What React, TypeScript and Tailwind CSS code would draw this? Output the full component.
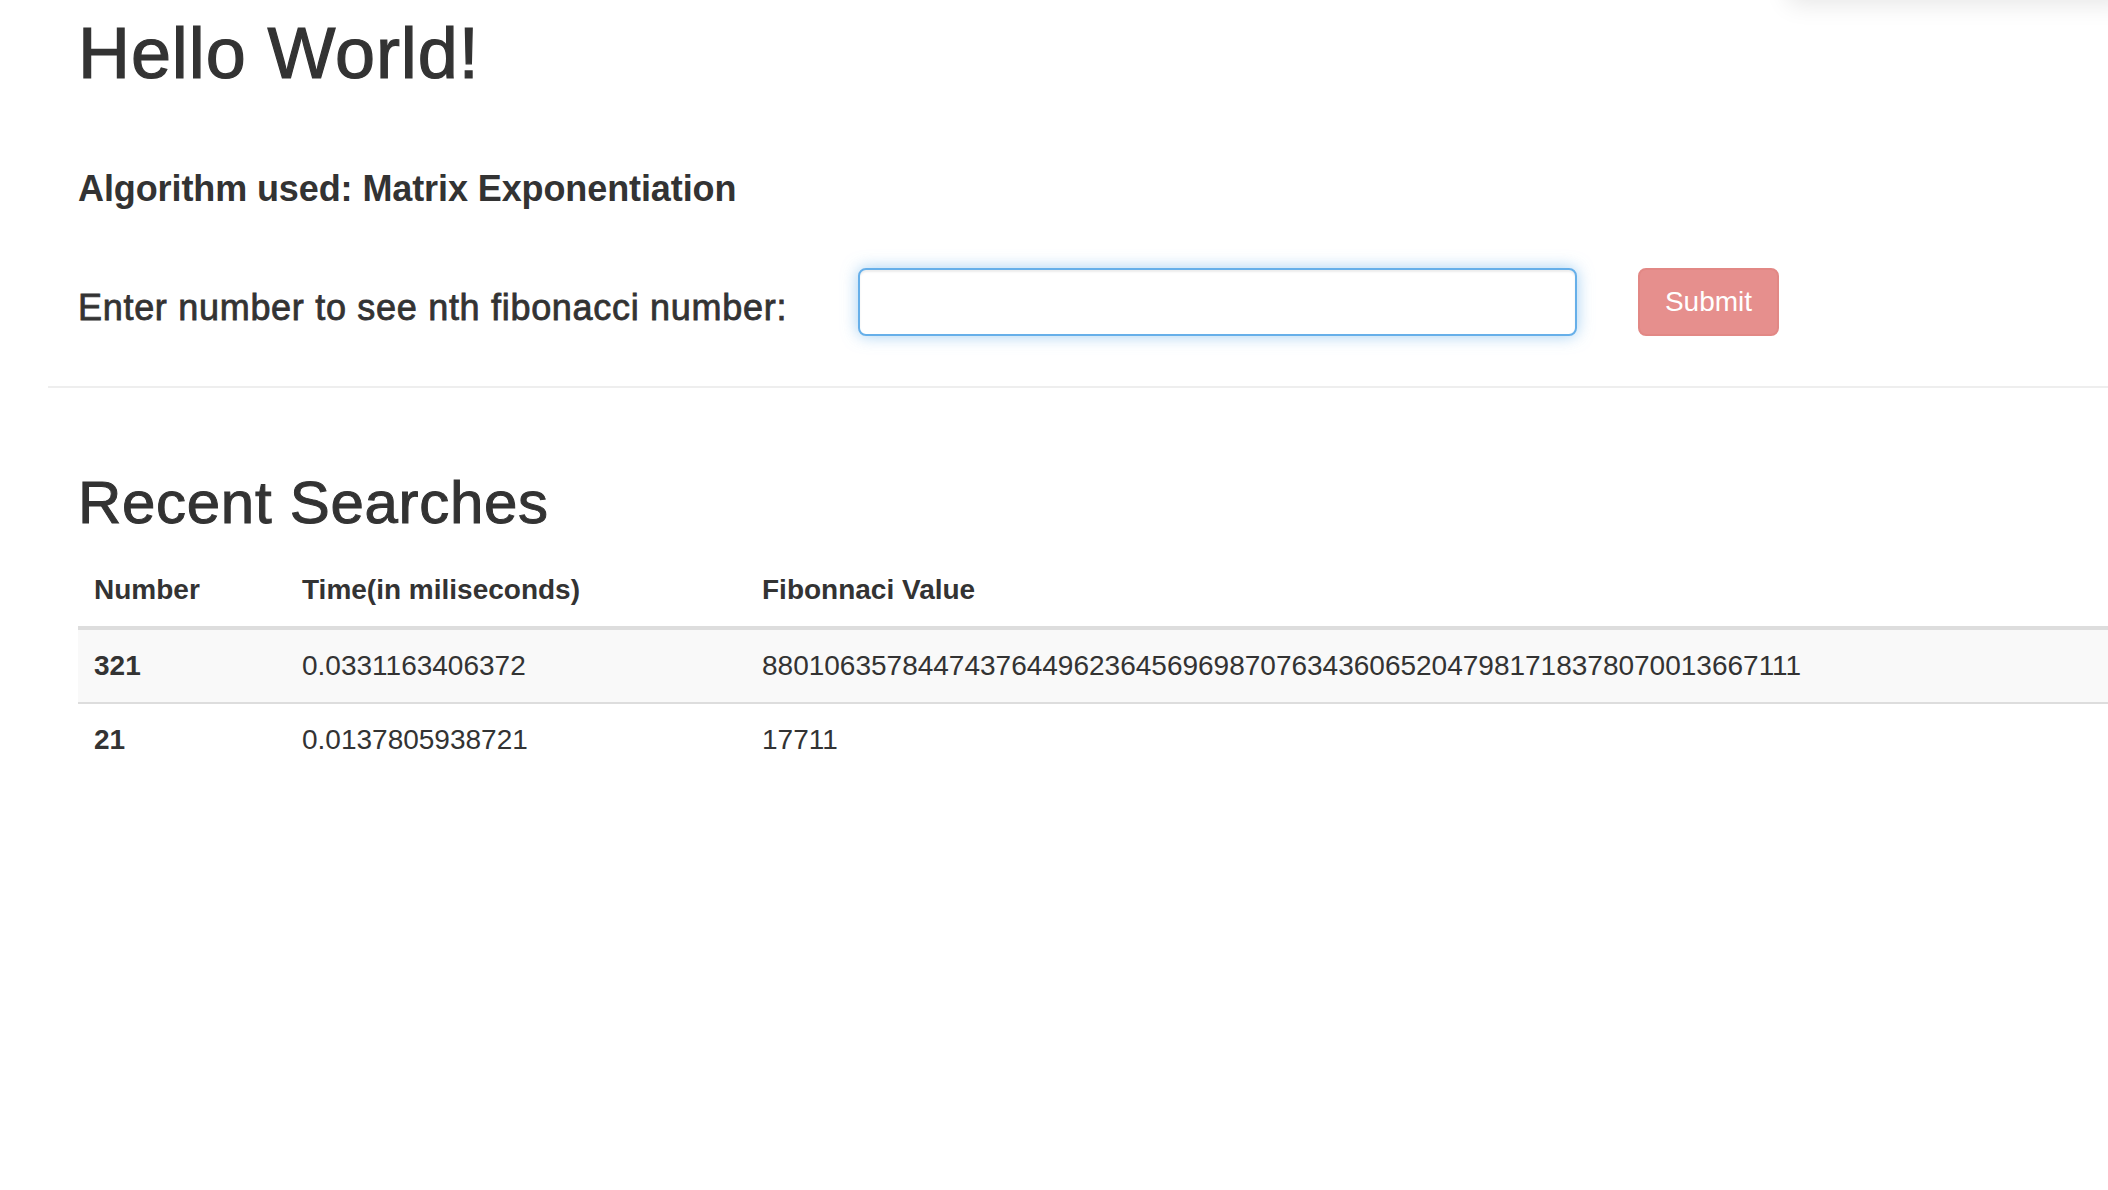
import React from "react";

export default function App() {
  const rows = [
    {
      n: "321",
      t: "0.0331163406372",
      v: "8801063578447437644962364569698707634360652047981718378070013667111",
    },
    { n: "21", t: "0.0137805938721", v: "17711" },
  ];
  return (
    <div className="relative min-h-screen w-full overflow-hidden bg-white text-[#333] font-['Liberation_Sans',Arial,sans-serif]">
      <div className="pointer-events-none absolute right-[-20px] top-[-40px] h-[40px] w-[340px] rounded-md bg-white shadow-[0_4px_24px_rgba(0,0,0,0.10)]" />
      <div className="pl-[48px]">
        <div className="pl-[30px] pr-[30px]">
          <h1 className="pt-[13px] text-[72px] leading-[80px] font-medium tracking-[0.9px] [-webkit-text-stroke:1.2px_#333]">Hello World!</h1>
          <h4 className="mt-[76px] text-[36px] leading-[40px] font-bold tracking-[-0.1px]">Algorithm used: Matrix Exponentiation</h4>
          <div className="mt-[59px] flex items-start">
            <label className="mt-[20px] w-[780px] shrink-0 text-[36px] leading-[40px] font-medium tracking-[0.7px] [-webkit-text-stroke:0.8px_#333]">
              Enter number to see nth fibonacci number:
            </label>
            <input
              type="text"
              className="h-[68px] w-[719px] shrink-0 rounded-[8px] border-2 border-[#66afe9] bg-white px-[24px] text-[28px] outline-none shadow-[inset_0_2px_2px_rgba(0,0,0,0.075),0_0_16px_rgba(102,175,233,0.6)]"
            />
            <button
              type="button"
              className="ml-[61px] h-[68px] w-[141px] shrink-0 rounded-[8px] border-2 border-[#e28885] bg-[#e68f8d] text-[28px] leading-[40px] text-white"
            >
              Submit
            </button>
          </div>
        </div>
        <div className="mt-[50px] h-[2px] bg-[#eee]" />
        <div className="pl-[30px]">
          <h2 className="mt-[82px] text-[60px] leading-[66px] font-medium tracking-[0.7px] [-webkit-text-stroke:1px_#333]">Recent Searches</h2>
          <table className="mt-[18px] w-full table-fixed border-collapse text-[28px] leading-[40px]">
            <thead>
              <tr>
                <th className="w-[208px] border-b-4 border-[#ddd] px-[16px] py-[16px] text-left font-bold">Number</th>
                <th className="w-[460px] border-b-4 border-[#ddd] px-[16px] py-[16px] text-left font-bold">Time(in miliseconds)</th>
                <th className="border-b-4 border-[#ddd] px-[16px] py-[16px] text-left font-bold">Fibonnaci Value</th>
              </tr>
            </thead>
            <tbody>
              {rows.map((r, i) => (
                <tr key={r.n} className={i % 2 === 0 ? "bg-[#f9f9f9]" : ""}>
                  <th className={`px-[16px] py-[16px] text-left font-bold ${i > 0 ? "border-t-2 border-[#ddd]" : ""}`}>{r.n}</th>
                  <td className={`px-[16px] py-[16px] ${i > 0 ? "border-t-2 border-[#ddd]" : ""}`}>{r.t}</td>
                  <td className={`px-[16px] py-[16px] whitespace-nowrap ${i > 0 ? "border-t-2 border-[#ddd]" : ""}`}>{r.v}</td>
                </tr>
              ))}
            </tbody>
          </table>
        </div>
      </div>
    </div>
  );
}
